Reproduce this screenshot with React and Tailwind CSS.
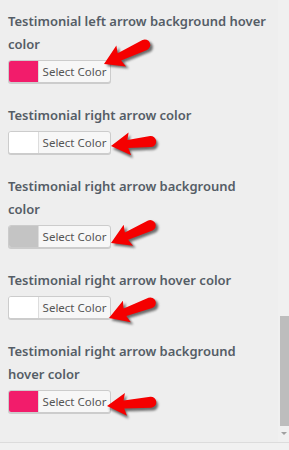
import React from "react";

function Arrow({ tip, angle, len }) {
  const L = len;
  const d = `M0,0 L19,-11.5 L17,-4 L${L - 5},-5.5 A5.5,5.5 0 0 1 ${L - 5},5.5 L17,4 L19,11.5 Z`;
  return (
    <g transform={`translate(${tip[0]},${tip[1]}) rotate(${angle})`}>
      <path d={d} transform="translate(1.5,3)" fill="rgba(0,0,0,0.55)" filter="url(#blur)" />
      <path d={d} fill="#f50000" />
    </g>
  );
}

function Item({ label, color, tip, angle, len }) {
  return (
    <div className="flex flex-col mb-[21px]">
      <div className="text-[13px] leading-[23px] font-semibold text-[#555d66]">{label}</div>
      <div className="relative mt-[4px] h-[23px]">
        <div className="flex h-[23px] w-[103px] border border-[#cccccc] rounded-[3px] bg-[#f7f7f7] shadow-[0_1px_0_#cccccc] overflow-hidden">
          <div className="w-[30px] h-full border-r border-[#dddddd]" style={{ background: color }} />
          <div className="flex-1 flex items-center justify-center text-[11.5px] text-[#555555] font-['Noto_Sans',sans-serif]">
            Select Color
          </div>
        </div>
        <svg className="absolute left-0 top-[-40px] pointer-events-none overflow-visible" width="170" height="90">
          <defs>
            <filter id="blur" x="-20%" y="-50%" width="140%" height="200%">
              <feGaussianBlur stdDeviation="1.3" />
            </filter>
          </defs>
          <Arrow tip={[tip[0] - 8, tip[1] + 40]} angle={angle} len={len} />
        </svg>
      </div>
    </div>
  );
}

export default function App() {
  const items = [
    { label: <>Testimonial left arrow background hover<br />color</>, color: "#f21c6b", tip: [104, 4], angle: -25, len: 50 },
    { label: <>Testimonial right arrow color</>, color: "#ffffff", tip: [111, 15], angle: -6.5, len: 45 },
    { label: <>Testimonial right arrow background<br />color</>, color: "#c4c4c4", tip: [111, 18], angle: -24, len: 48 },
    { label: <>Testimonial right arrow hover color</>, color: "#ffffff", tip: [109, 22], angle: -20, len: 49 },
    { label: <>Testimonial right arrow background<br />hover color</>, color: "#f21c6b", tip: [107, 16], angle: -5, len: 49 },
  ];
  return (
    <div className="w-[289px] h-[450px] bg-[#eeeeee] flex flex-col overflow-hidden font-['Noto_Sans',sans-serif]">
      <div className="flex h-[442px]">
        <div className="flex-1 pl-[8px] pt-[10px]">
          {items.map((it, i) => (
            <Item key={i} {...it} />
          ))}
        </div>
        <div className="w-[11px] bg-[#f0f0f0] flex flex-col items-end pt-[316px]">
          <div className="w-[9px] h-[110px] bg-[#bdbdbd]" />
          <div className="mt-[6px] mr-[2px] w-0 h-0 border-l-[3px] border-r-[3px] border-t-[3px] border-l-transparent border-r-transparent border-t-[#a0a0a0]" />
        </div>
      </div>
      <div className="flex-1 border-t border-[#dcdcdc] bg-[#f1f1f1]" />
    </div>
  );
}
